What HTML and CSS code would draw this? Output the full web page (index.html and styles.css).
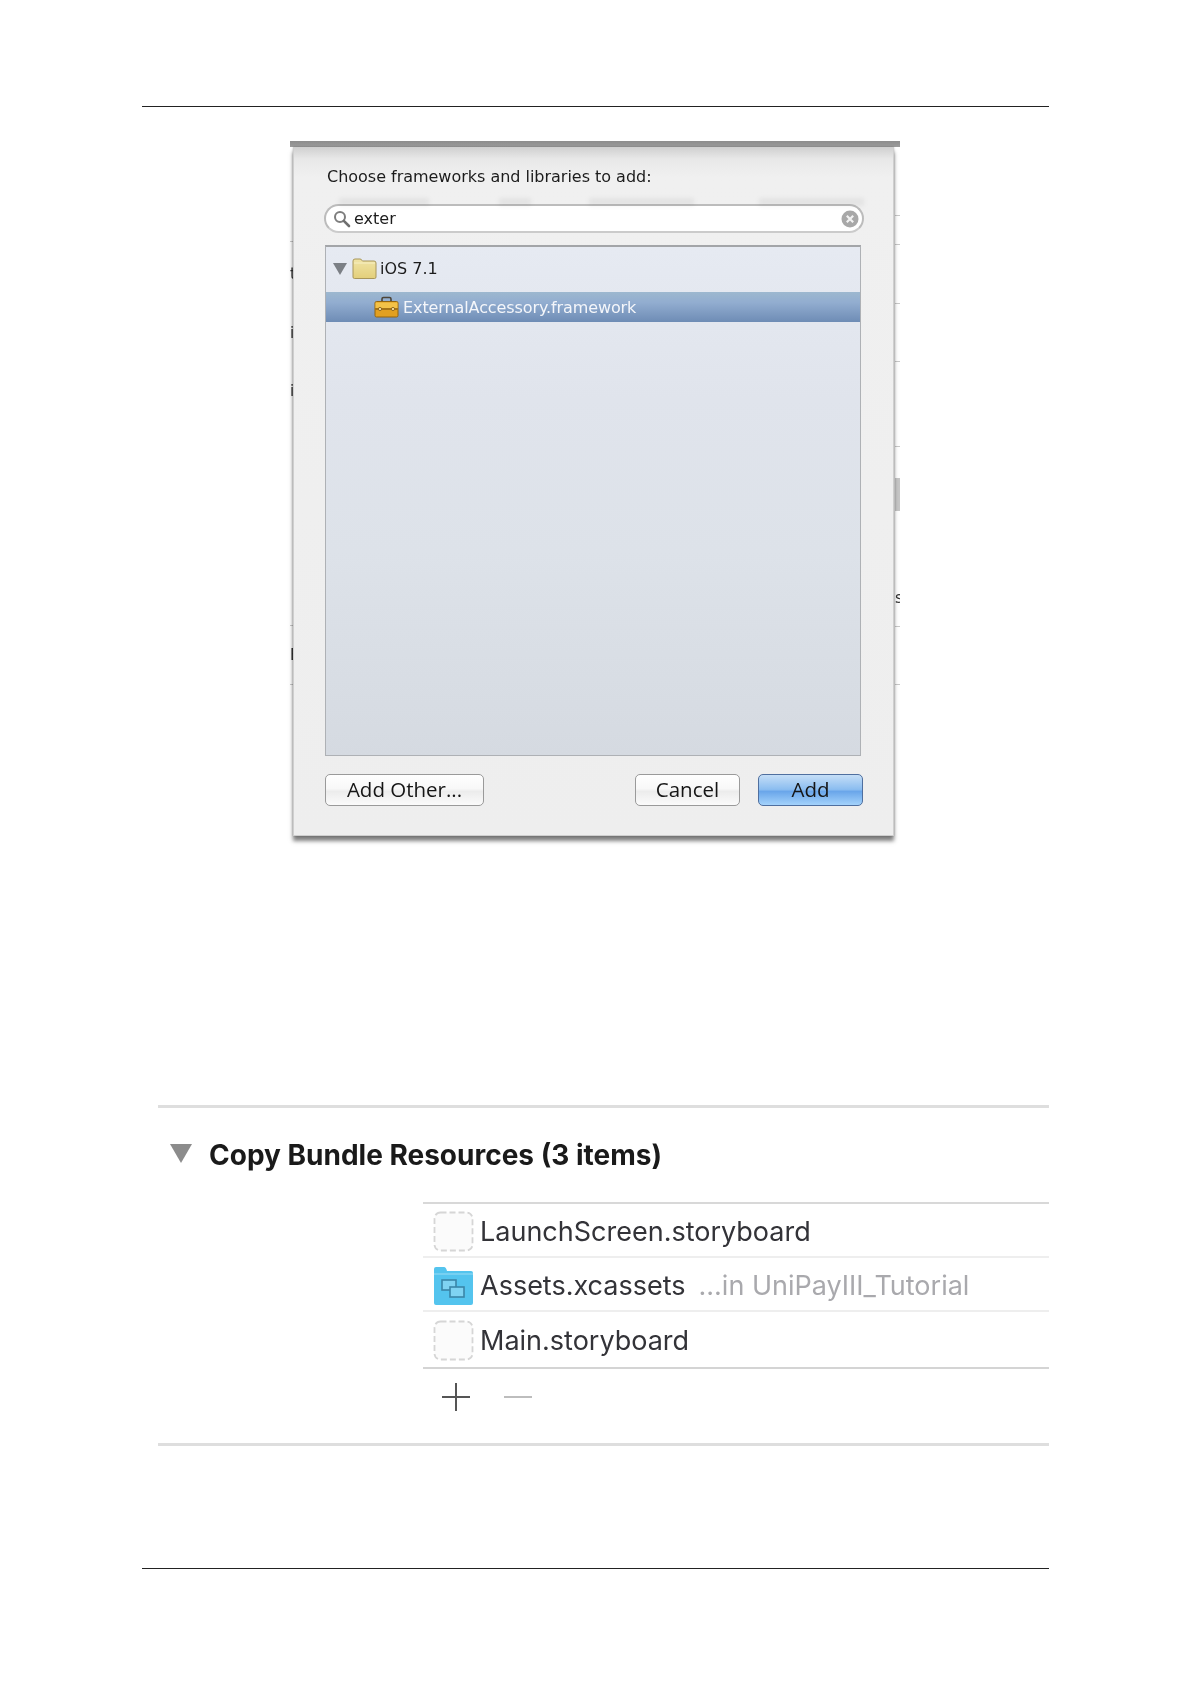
FILE: index.html
```html
<!DOCTYPE html>
<html lang="en">
<head>
<meta charset="utf-8">
<title>Adding frameworks and bundle resources</title>
<link rel="stylesheet" href="styles.css">
</head>
<body>
<main class="page">
  <hr class="rule">
  <section class="shot">
    <div class="band"></div>
    <div class="side side-left">
      <span class="frag f1">t</span><span class="frag f2">i</span><span class="frag f3">i</span><span class="frag f4">E</span>
      <i class="tick t1"></i><i class="tick t2"></i><i class="tick t3"></i>
    </div>
    <div class="side side-right">
      <i class="tick r1"></i><i class="tick r2"></i><i class="tick r3"></i><i class="tick r4"></i><i class="tick r5"></i><i class="tick r6"></i><i class="tick r7"></i>
      <i class="block"></i><span class="frag f5">s</span>
    </div>
    <div class="dialog">
      <div class="ghosts"><i></i><i></i><i></i><i></i></div>
      <p class="prompt">Choose frameworks and libraries to add:</p>
      <div class="search">
        <svg class="glass" width="18" height="18" viewBox="0 0 18 18"><circle cx="7" cy="7" r="5" fill="#fff" stroke="#7d7d7d" stroke-width="2"/><path d="M10.8 10.8 16 16" stroke="#6f6f6f" stroke-width="2.6" stroke-linecap="round"/></svg>
        <span class="query">exter</span>
        <svg class="clear" width="18" height="18" viewBox="0 0 18 18"><circle cx="9" cy="9" r="8.5" fill="#a8a8a8"/><path d="M5.8 5.800 12.200 12.200M12.200 5.800 5.800 12.200" stroke="#f2f2f2" stroke-width="2.200"/></svg>
      </div>
      <div class="list">
        <div class="group">
          <svg class="disc" width="14" height="12" viewBox="0 0 14 12"><path d="M0 0H14L7 12Z" fill="#7b7f85"/></svg>
          <svg class="folder" width="25" height="21" viewBox="0 0 25 21"><defs><linearGradient id="fg" x1="0" y1="0" x2="0" y2="1"><stop offset="0" stop-color="#f0e4a6"/><stop offset="1" stop-color="#e3cf7a"/></linearGradient></defs><path d="M1 19V3q0-2 2-2h5q1.500 0 2 1.500L10.500 3H22q2 0 2 2v14q0 1.500-1.500 1.500h-20Q1 20.500 1 19Z" fill="url(#fg)" stroke="#a8965a"/><path d="M2 5H23" stroke="#f7efc3"/></svg>
          <span class="group-name">iOS 7.1</span>
        </div>
        <div class="selected">
          <svg class="case" width="25" height="22" viewBox="0 0 25 22"><path d="M8 6V3q0-1.500 1.500-1.500h6Q17 1.500 17 3v3" fill="none" stroke="#4d4538" stroke-width="1.600"/><rect x="1" y="5.500" width="23" height="15.500" rx="1.500" fill="#e2a021" stroke="#94650f"/><path d="M1.500 6.500H23.500V12H1.500Z" fill="#f3c248"/><path d="M1.500 13H23.500" stroke="#7c5410" stroke-width="1.200"/><circle cx="6" cy="13" r="1.600" fill="#f7e3a7" stroke="#7c5410" stroke-width=".8"/><circle cx="19" cy="13" r="1.600" fill="#f7e3a7" stroke="#7c5410" stroke-width=".8"/></svg>
          <span class="file-name">ExternalAccessory.framework</span>
        </div>
      </div>
      <div class="actions">
        <button class="btn btn-other" type="button">Add Other...</button>
        <div class="actions-right">
          <button class="btn btn-cancel" type="button">Cancel</button>
          <button class="btn btn-add" type="button">Add</button>
        </div>
      </div>
    </div>
  </section>

  <section class="phase">
    <div class="phase-head">
      <svg class="phase-disc" width="22" height="19" viewBox="0 0 22 19"><path d="M0 0H22L11 19Z" fill="#8c8c8c"/></svg>
      <h2 class="phase-title">Copy Bundle Resources (3 items)</h2>
    </div>
    <ul class="files">
      <li class="file">
        <svg class="doc" width="41" height="41" viewBox="0 0 41 41"><rect x="1.500" y="1.500" width="38" height="38" rx="6" fill="#fbfbfb" stroke="#d6d6d6" stroke-width="1.800" stroke-dasharray="6 3"/></svg>
        <span class="fname">LaunchScreen.storyboard</span>
      </li>
      <li class="file">
        <svg class="doc" width="41" height="41" viewBox="0 0 41 41"><path d="M1 38V4q0-2 2-2h8q2 0 3 4h24q2 0 2 2v30q0 2-2 2H3q-2 0-2-2Z" fill="#54c4ee"/><path d="M1 9H40" stroke="#9adcf5"/><rect x="9" y="15" width="14" height="10" fill="#7fd3f2" stroke="#3a86a8" stroke-width="1.600"/><rect x="17" y="22" width="14" height="10" fill="#7fd3f2" stroke="#3a86a8" stroke-width="1.600"/></svg>
        <span class="fname">Assets.xcassets</span><span class="fpath">...in UniPayIII_Tutorial</span>
      </li>
      <li class="file">
        <svg class="doc" width="41" height="41" viewBox="0 0 41 41"><rect x="1.500" y="1.500" width="38" height="38" rx="6" fill="#fbfbfb" stroke="#d6d6d6" stroke-width="1.800" stroke-dasharray="6 3"/></svg>
        <span class="fname">Main.storyboard</span>
      </li>
    </ul>
    <div class="tools">
      <svg width="30" height="30" viewBox="0 0 30 30"><path d="M15 1V29M1 15H29" stroke="#555" stroke-width="2"/></svg>
      <svg width="30" height="30" viewBox="0 0 30 30"><path d="M1 15H29" stroke="#bdbdbd" stroke-width="2"/></svg>
    </div>
  </section>
  <hr class="rule rule-bottom">
</main>
</body>
</html>
```

FILE: styles.css
```css
* { box-sizing: border-box; }
html, body { margin: 0; background: #fff; }
.page { width: 1191px; height: 1684px; padding-top: 106px; overflow: hidden; }
.rule { height: 1px; margin: 0 142px; border: 0; background: #222; }
.rule-bottom { margin-top: 122px; }

/* dialog screenshot */
.shot { position: relative; width: 610px; height: 701px; margin: 34px 0 0 290px; filter: blur(.45px); }
.band { height: 6px; background: linear-gradient(#8d8d8d, #9c9c9c); }
.dialog {
  position: relative; width: 601px; height: 689px; margin-left: 3px; padding: 0 31px;
  background: linear-gradient(#cfcfcf 0, #e8e8e8 12px, #f0f0f0 30px, #eeeeee);
  border: 1px solid #cfcfcf; border-top: 0;
  box-shadow: 0 5px 4px rgba(0,0,0,.5), 0 0 2px rgba(0,0,0,.25);
  font-family: "DejaVu Sans", sans-serif; color: #1c1c1c;
}
.prompt { margin: 0 0 0 2px; padding-top: 21px; height: 57px; font-size: 16px; line-height: 18px; letter-spacing: -.02px; }
.search {
  display: flex; align-items: center; height: 29px; margin-left: -1px; width: 540px; padding: 0 3px 0 7px;
  background: #fff; border: 2px solid #bcbcbc; border-bottom-color: #cbcbcb; border-radius: 15px;
}
.glass { flex: none; }
.query { margin-left: 3px; flex: 1; font-size: 16px; }
.clear { flex: none; }
.list {
  width: 536px; height: 511px; margin-top: 12px;
  background: linear-gradient(#e6eaf2, #e0e4ec 30%, #dde2e9 60%, #d5dae1);
  border: 1px solid #aeb1b5; border-top: 2px solid #a3a5a8;
}
.group { display: flex; align-items: center; height: 45px; padding: 0 0 2px 7px; }
.disc { margin-right: 5px; }
.folder { margin-right: 3px; }
.group-name { font-size: 16px; }
.selected {
  display: flex; align-items: center; height: 30px; padding-left: 48px;
  background: linear-gradient(#9db8cf, #92add0 35%, #6e8cb5);
  color: #f4f6fa;
}
.case { margin-right: 4px; }
.file-name { font-size: 16px; letter-spacing: -.1px; }
.actions { display: flex; justify-content: space-between; width: 538px; margin-top: 18px; }
.actions-right { display: flex; gap: 18px; }
.btn {
  height: 32px; padding: 0 0 3px; border: 1px solid #9a9a9a; border-radius: 5px;
  background: linear-gradient(#fff, #f8f8f8 45%, #ececec 55%, #fbfbfb);
  font: 20.5px/26px "Open Sans", "DejaVu Sans", sans-serif; color: #151515;
}
.btn-other { width: 159px; }
.btn-cancel { width: 105px; }
.btn-add {
  width: 105px; border-color: #4f6f9f;
  background: linear-gradient(#c5def7, #8bbdf0 48%, #6aa6ea 55%, #a3d2fb);
}
.ghosts { position: absolute; top: 51px; left: 0; width: 100%; height: 10px; filter: blur(2px); }
.ghosts i { position: absolute; top: 0; height: 8px; background: rgba(0,0,0,.05); }
.ghosts i:nth-child(1) { left: 45px; width: 90px; }
.ghosts i:nth-child(2) { left: 205px; width: 32px; }
.ghosts i:nth-child(3) { left: 295px; width: 105px; }
.ghosts i:nth-child(4) { left: 465px; width: 105px; }

/* slivers of the window behind the dialog */
.side { position: absolute; top: 0; width: 5px; height: 100%; font: 15px/18px "DejaVu Sans", sans-serif; color: #333; overflow: hidden; }
.side-left { left: 0; }
.side-right { right: 0; }
.frag { position: absolute; left: 0; }
.f1 { top: 124px; }
.f2 { top: 183px; }
.f3 { top: 241px; }
.f4 { top: 505px; }
.f5 { top: 448px; }
.tick { position: absolute; left: 0; width: 100%; height: 1px; background: #c9c9c9; }
.t1 { top: 484px; }
.t2 { top: 543px; }
.t3 { top: 100px; }
.r1 { top: 74px; }
.r2 { top: 103px; }
.r3 { top: 162px; }
.r4 { top: 220px; }
.r5 { top: 305px; }
.r6 { top: 485px; }
.r7 { top: 543px; }
.block { position: absolute; top: 337px; left: 0; width: 100%; height: 33px; background: #c6c6c6; }

/* copy bundle resources */
.phase { width: 891px; height: 341px; margin: 263px 0 0 158px; border-top: 3px solid #dedede; border-bottom: 3px solid #dedede; filter: blur(.45px); }
.phase-head { display: flex; align-items: center; height: 94px; padding-left: 12px; }
.phase-disc { margin-top: -4px; margin-right: 17px; }
.phase-title { margin: 0; font: 700 28px/32px Inter, "Liberation Sans", sans-serif; color: #1a1a1a; }
.files { margin: 0 0 0 265px; padding: 0; list-style: none; border-top: 2px solid #d8d8d8; border-bottom: 2px solid #d4d4d4; }
.file { display: flex; align-items: center; height: 54px; padding: 2px 0 0 10px; border-bottom: 2px solid #eeeeee; }
.file:last-child { height: 55px; border-bottom: 0; }
.doc { flex: none; margin-right: 6px; }
.fname { padding-top: 1px; font: 400 27px/32px Inter, "Liberation Sans", sans-serif; color: #333338; }
.fpath { padding-top: 1px; margin-left: 13px; font: 400 27px/32px Inter, "Liberation Sans", sans-serif; color: #a9a9ad; }
.tools { display: flex; gap: 32px; margin: 13px 0 0 283px; }
```
